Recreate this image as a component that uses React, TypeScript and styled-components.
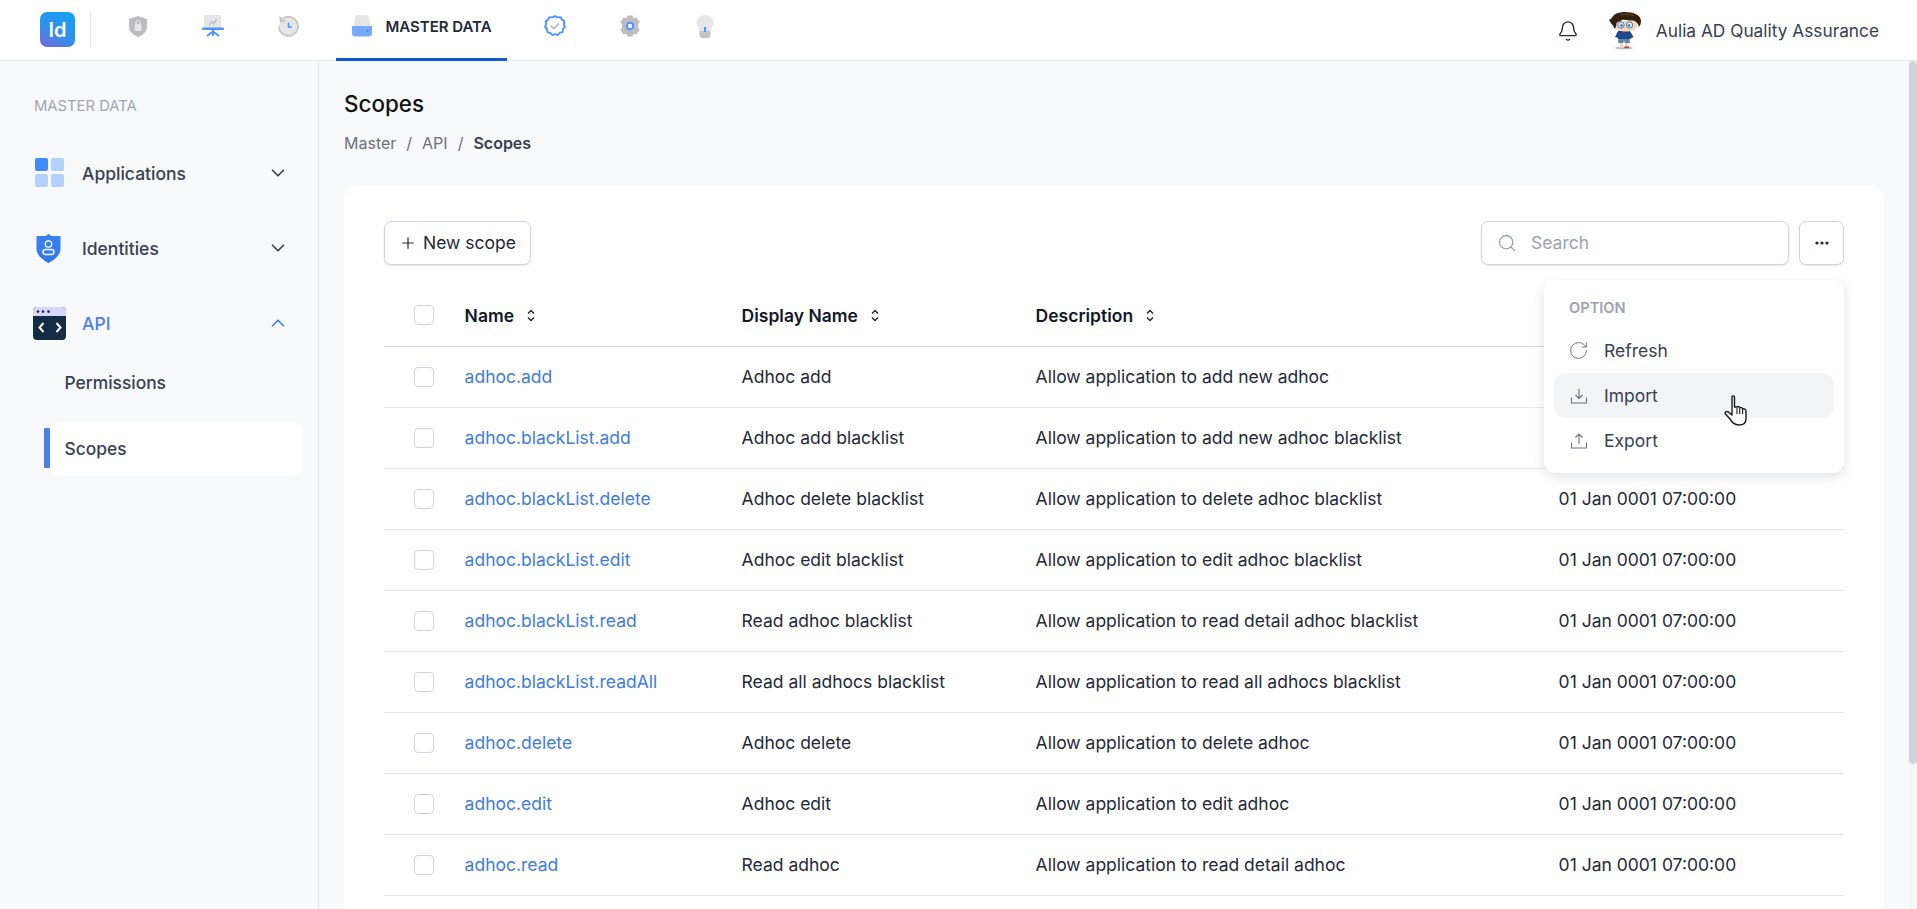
import { ReactNode } from 'react';
import styled, { createGlobalStyle } from 'styled-components';
import { ChevronDown, ChevronUp, Search, RotateCw, Plus, Bell } from 'lucide-react';

const GlobalStyle = createGlobalStyle`
  html, body, #root {
    margin: 0;
    padding: 0;
    height: 100%;
  }
  body {
    font-family: Inter, "Liberation Sans", sans-serif;
    font-size: 17.5px;
    color: #111827;
    background: #f8f9fb;
    overflow: hidden;
  }
  * {
    box-sizing: border-box;
  }
`;

const Page = styled.div`
  display: flex;
  flex-direction: column;
  height: 100vh;
`;

const Header = styled.header`
  display: flex;
  align-items: stretch;
  flex: 0 0 61px;
  background: #fff;
  box-shadow: inset 0 -1px 0 #e9eaee;
  padding: 0 38px 0 40px;
`;

const LogoBox = styled.div`
  width: 35px;
  height: 35px;
  margin-top: 12px;
  border-radius: 7px;
  background: linear-gradient(30deg, #7a67d6 0%, #2f8fee 45%, #14a3f2 100%);
  color: #fff;
  font-weight: 600;
  font-size: 20px;
  display: flex;
  align-items: center;
  justify-content: center;
`;

const Divider = styled.div`
  width: 1px;
  height: 37px;
  margin: 11px 9px 0 15px;
  background: #e5e7eb;
`;

const Tab = styled.div<{ $active?: boolean }>`
  display: flex;
  align-items: center;
  justify-content: center;
  gap: 12px;
  height: 61px;
  padding-bottom: 6px;
  width: ${(p) => (p.$active ? '171px' : '75px')};
  margin: ${(p) => (p.$active ? '0 10px 0 11px' : '0')};
  border-bottom: 3px solid ${(p) => (p.$active ? '#0b5ad4' : 'transparent')};
  font-size: 15px;
  font-weight: 600;
  color: #1f2937;
`;

const HeaderRight = styled.div`
  margin-left: auto;
  display: flex;
  align-items: center;
  color: #374151;
`;

const UserName = styled.span`
  margin-left: 14px;
  font-size: 17.3px;
  color: #374151;
`;

const BellWrap = styled.span`
  display: flex;
  margin-right: 29px;
  color: #1f2937;
`;

const Body = styled.div`
  flex: 1;
  display: flex;
  min-height: 0;
`;

const Sidebar = styled.aside`
  flex: 0 0 319px;
  border-right: 1px solid #e5e7eb;
  padding: 34px 15px 0 34px;
`;

const SideLabel = styled.div`
  font-size: 14.8px;
  line-height: 22px;
  color: #a1a5b3;
  margin-bottom: 26px;
`;

const SideItem = styled.div<{ $open?: boolean }>`
  display: flex;
  align-items: center;
  height: 60px;
  margin-bottom: ${(p) => (p.$open ? '2px' : '15px')};
  color: ${(p) => (p.$open ? '#4f7fe8' : '#374151')};
  font-weight: 500;
`;

const SideIcon = styled.span`
  flex: 0 0 48px;
  display: flex;
  align-items: center;
`;

const SideChevron = styled.span`
  margin-left: auto;
  margin-right: 14px;
  display: flex;
`;

const SubItem = styled.div<{ $active?: boolean }>`
  position: relative;
  display: flex;
  align-items: center;
  height: 55px;
  margin: 0 0 11px 13px;
  padding-left: 17.5px;
  border-radius: 12px;
  color: #374151;
  font-weight: 500;
  font-size: 17.4px;
  background: ${(p) => (p.$active ? '#fff' : 'transparent')};

  &::before {
    content: '';
    display: ${(p) => (p.$active ? 'block' : 'none')};
    position: absolute;
    left: -3px;
    top: 7px;
    bottom: 8px;
    width: 6px;
    border-radius: 1px;
    background: #4a7fe8;
  }
`;

const Main = styled.main`
  flex: 1;
  min-width: 0;
  display: flex;
  flex-direction: column;
  overflow: hidden;
  padding: 28px 25px 25px;
  background: #f8f9fb;
`;

const ScrollRail = styled.div`
  flex: 0 0 8px;
  background: #f5f6f8;
`;

const ScrollThumb = styled.div`
  height: 703px;
  border-radius: 4px;
  background: #d0d3da;
`;

const Title = styled.h1`
  margin: 0;
  font-size: 22.4px;
  line-height: 30px;
  font-weight: 500;
  color: #111;
`;

const Crumbs = styled.div`
  display: flex;
  align-items: center;
  gap: 10px;
  margin-top: 12px;
  margin-bottom: 31px;
  font-size: 16px;
  line-height: 24px;
  color: #6b7280;
`;

const CrumbCurrent = styled.b`
  font-weight: 600;
  color: #374151;
`;

const Card = styled.section`
  position: relative;
  flex: 0 0 760px;
  background: #fff;
  border-radius: 12px;
  padding: 35px 40px 0;
`;

const Toolbar = styled.div`
  display: flex;
  align-items: center;
  gap: 10px;
  margin-bottom: 20px;
`;

const Button = styled.button`
  display: flex;
  align-items: center;
  justify-content: center;
  height: 44px;
  background: #fff;
  border: 1px solid #d1d5db;
  border-radius: 7px;
  box-shadow: 0 1px 2px rgba(17, 24, 39, 0.1);
  font: inherit;
  color: #1f2937;
  padding: 0;
`;

const NewButton = styled(Button)`
  width: 147px;
  gap: 6px;
  margin-right: auto;
  padding-bottom: 1px;
`;

const MoreButton = styled(Button)`
  width: 45px;
`;

const SearchBox = styled.div`
  display: flex;
  align-items: center;
  gap: 14px;
  width: 308px;
  height: 44px;
  padding: 0 0 1px 15px;
  background: #fff;
  border: 1px solid #d1d5db;
  border-radius: 7px;
  box-shadow: 0 1px 2px rgba(17, 24, 39, 0.1);
  color: #9ca3af;
`;

const Table = styled.table`
  width: 100%;
  table-layout: fixed;
  border-collapse: collapse;
`;

const HeadCell = styled.th`
  height: 61px;
  padding: 0;
  text-align: left;
  font-weight: 600;
  color: #111827;
  border-bottom: 1px solid #d1d5db;
`;

const Cell = styled.td`
  height: 61px;
  padding: 0;
  color: #1f2937;
  border-bottom: 1px solid #e5e7eb;
`;

const HeadLabel = styled.span`
  display: inline-flex;
  align-items: center;
  gap: 13px;
`;

const Check = styled.span`
  display: block;
  width: 20px;
  height: 20px;
  margin-left: 30px;
  border: 1px solid #d1d5db;
  border-radius: 4px;
  background: #fff;
`;

const NameLink = styled.a`
  color: #3f7cdc;
`;

const Menu = styled.div`
  position: absolute;
  top: 94px;
  right: 40px;
  width: 300px;
  height: 193px;
  padding: 16px 10px;
  background: #fff;
  border-radius: 11px;
  box-shadow: 0 4px 12px rgba(17, 24, 39, 0.12);
`;

const MenuLabel = styled.div`
  padding-left: 15px;
  margin-bottom: 8px;
  font-size: 14.6px;
  line-height: 24px;
  font-weight: 600;
  color: #9ca3af;
`;

const MenuItem = styled.div<{ $hover?: boolean }>`
  display: flex;
  align-items: center;
  gap: 17px;
  height: 45px;
  padding-left: 16px;
  border-radius: 12px;
  background: ${(p) => (p.$hover ? '#f3f4f6' : 'transparent')};
  color: #374151;
`;

const MenuIcon = styled.span`
  flex: 0 0 17px;
  min-width: 0;
  display: flex;
  align-items: center;
  justify-content: center;
  color: #6b7280;

  svg {
    flex-shrink: 0;
  }
`;

const Pointer = styled.span`
  position: absolute;
  left: 180px;
  top: 115px;
  display: flex;
`;

/* top bar duotone icons */
const ShieldIcon = () => (
  <svg width="18" height="21" viewBox="0 0 18 21">
    <path d="M9 0 L18 3 V11 C18 16 13 19.5 9 21 C5 19.5 0 16 0 11 V3 Z" fill="#bcbdc2" />
    <rect x="5.5" y="8" width="7" height="7" rx="1.5" fill="#e8e8ea" />
    <path d="M7 8 V6.5 a2 2 0 0 1 4 0 V8" fill="none" stroke="#e8e8ea" strokeWidth="1.2" />
  </svg>
);

const BoardIcon = () => (
  <svg width="22" height="22" viewBox="0 0 22 22">
    <rect x="2" y="0" width="17" height="13" fill="#e6e6e8" />
    <path d="M7 10 L10 6.5 L11.5 8.5 L14.5 4.5" fill="none" stroke="#bcbdc2" strokeWidth="1.4" />
    <rect x="0" y="12.5" width="22" height="2.4" rx="1" fill="#4b94ff" />
    <path d="M10.9 14 V21 M5 21 L10.9 16.5 L17 21" fill="none" stroke="#4b94ff" strokeWidth="2" />
  </svg>
);

const HistoryIcon = () => (
  <svg width="22" height="22" viewBox="0 0 22 22">
    <circle cx="11.5" cy="11.5" r="9.5" fill="#e6e6e8" />
    <path d="M4 5.5 A9.5 9.5 0 1 1 2 11.5" fill="none" stroke="#c4c5c9" strokeWidth="1.8" />
    <path d="M3 1.5 L3.6 6.5 L8.5 5.5" fill="none" stroke="#c4c5c9" strokeWidth="1.6" />
    <path d="M11.5 7.5 V12 H15" fill="none" stroke="#4b94ff" strokeWidth="1.6" />
  </svg>
);

const DatabaseIcon = () => (
  <svg width="22" height="22" viewBox="0 0 22 22">
    <path d="M3 11 L4 3 Q4.3 0 7 0 H15 Q17.7 0 18 3 L19.5 11 Z" fill="#e6e6e8" />
    <path d="M1 11 H21 V18 Q21 21.5 17.5 21.5 H4.5 Q1 21.5 1 18 Z" fill="#77aaff" />
    <circle cx="16.5" cy="16" r="0.9" fill="#3b7de8" />
  </svg>
);

const BadgeIcon = () => (
  <svg width="22" height="22" viewBox="0 0 22 22">
    <path
      d="M11 1 L13.6 2.4 L16.6 2.1 L18 4.7 L20.4 6.4 L19.8 9.3 L21 11.9 L19 14.1 L18.6 17.1 L15.7 17.9 L13.6 20.1 L11 19 L8.4 20.1 L6.3 17.9 L3.4 17.1 L3 14.1 L1 11.9 L2.2 9.3 L1.6 6.4 L4 4.7 L5.4 2.1 L8.4 2.4 Z"
      fill="#fff"
      stroke="#4b94ff"
      strokeWidth="1.9"
      strokeLinejoin="round"
    />
    <path d="M7 11 L10 13.6 L15 8.5" fill="none" stroke="#bcbdc2" strokeWidth="1.8" />
  </svg>
);

const GearIcon = () => (
  <svg width="22" height="22" viewBox="0 0 22 22">
    <path
      d="M8.5 0.5 H13.5 L14.5 3.2 L17.3 2.4 L20.8 7 L19 9 V13 L20.8 15 L17.3 19.6 L14.5 18.8 L13.5 21.5 H8.5 L7.5 18.8 L4.7 19.6 L1.2 15 L3 13 V9 L1.2 7 L4.7 2.4 L7.5 3.2 Z"
      fill="#bcbdc2"
      strokeLinejoin="round"
    />
    <circle cx="11" cy="11" r="3.2" fill="#fff" stroke="#4b94ff" strokeWidth="2" />
  </svg>
);

const BulbIcon = () => (
  <svg width="18" height="23" viewBox="0 0 18 23">
    <path d="M9 0 C14 0 17.5 3.8 17.5 8 C17.5 11.5 14.5 13 14.5 17 H3.5 C3.5 13 0.5 11.5 0.5 8 C0.5 3.8 4 0 9 0 Z" fill="#e6e6e8" />
    <path d="M3.5 16 H14.5 V20 Q14.5 23 11.5 23 H6.5 Q3.5 23 3.5 20 Z" fill="#c1c2c6" />
    <rect x="8" y="12" width="2" height="5" fill="#4b94ff" />
  </svg>
);

const ConanAvatar = () => (
  <svg width="34" height="38" viewBox="0 0 34 38">
    <ellipse cx="16" cy="36" rx="9" ry="1.5" fill="#bdbdbd" />
    <rect x="12" y="30" width="3" height="5" fill="#ecd3b8" />
    <rect x="17" y="30" width="3" height="5" fill="#ecd3b8" />
    <rect x="11" y="34.5" width="4.5" height="1.6" fill="#d8d8d8" />
    <rect x="16.5" y="34.5" width="4.5" height="1.6" fill="#b33b3b" />
    <path d="M10.5 26 H21.5 L22 31 H17 L16 29 L15 31 H10 Z" fill="#6485ab" />
    <path d="M10 19 Q16 17 22 19 L25.5 25 L22.5 26.5 V27 H10 V26 L7 25 Z" fill="#1d4a8e" />
    <path d="M14.5 19 L16 22 L17.5 19 Z" fill="#c62828" />
    <path d="M7 9 H29 V15 Q27 19.5 18 19.5 Q9 19.5 7 15 Z" fill="#f2d8bd" />
    <path d="M1 8 L4 6 C5 2 11 0 17 0 C25 0 33 3 33 9 C33 12 32 13 31 15 C30 11 28 9 25 8.5 C21 9 17 7 14 8 C12 10 10 9 8.5 11 C8.5 13 8 15 7 17 C5.5 15.5 5.5 13 3.5 12 Z" fill="#33200f" />
    <path d="M12 3 C16 1.5 22 2 26 4" fill="none" stroke="#6b4a2a" strokeWidth="1" />
    <circle cx="13" cy="13" r="3.2" fill="#d7e6f6" stroke="#45699b" strokeWidth="0.8" />
    <circle cx="21.5" cy="13" r="3.2" fill="#d7e6f6" stroke="#45699b" strokeWidth="0.8" />
    <circle cx="13.5" cy="13.5" r="1.3" fill="#3f6fb0" />
    <circle cx="21" cy="13.5" r="1.3" fill="#3f6fb0" />
  </svg>
);

/* sidebar icons */
const GridIcon = () => (
  <svg width="30" height="30" viewBox="0 0 30 30">
    <rect x="1" y="0" width="13" height="13" rx="2" fill="#3f8cff" />
    <rect x="17" y="0" width="13" height="13" rx="2" fill="#b2d1ff" />
    <rect x="1" y="16" width="13" height="13" rx="2" fill="#b2d1ff" />
    <rect x="17" y="16" width="13" height="13" rx="2" fill="#b2d1ff" />
  </svg>
);

const IdentityIcon = () => (
  <svg width="29" height="29" viewBox="0 0 29 29">
    <defs>
      <linearGradient id="shieldFill" x1="0" y1="0" x2="0" y2="1">
        <stop offset="0" stopColor="#3b82f0" />
        <stop offset="1" stopColor="#2f76e8" />
      </linearGradient>
    </defs>
    <path d="M14.5 0 L17.5 2 H26.5 V15 C26.5 21 20.5 26 14.5 29 C8.5 26 2.5 21 2.5 15 V2 H11.5 Z" fill="url(#shieldFill)" />
    <circle cx="14.5" cy="10" r="3.2" fill="none" stroke="#fff" strokeWidth="1.3" />
    <rect x="9" y="15.5" width="11" height="5" rx="2.5" fill="none" stroke="#fff" strokeWidth="1.3" />
  </svg>
);

const ApiIcon = () => (
  <svg width="33" height="33" viewBox="0 0 33 33" style={{ marginLeft: -1 }}>
    <rect x="0" y="0" width="33" height="33" rx="4" fill="#152c47" />
    <path d="M0 9 V4 Q0 0 4 0 H29 Q33 0 33 4 V9 Z" fill="#d9d6fb" />
    <circle cx="5" cy="4.6" r="1.3" fill="#152c47" />
    <circle cx="10" cy="4.6" r="1.3" fill="#152c47" />
    <circle cx="15.5" cy="4.6" r="1.3" fill="#152c47" />
    <path d="M10.5 16 L6.5 20.5 L10.5 25 M23.5 16 L27.5 20.5 L23.5 25" fill="none" stroke="#fff" strokeWidth="2" />
  </svg>
);

/* small table and menu icons */
const SortIcon = () => (
  <svg width="8" height="13" viewBox="0 0 8 13">
    <path d="M1 4.5 L4 1.5 L7 4.5 M1 8.5 L4 11.5 L7 8.5" fill="none" stroke="#1f2937" strokeWidth="1.5" />
  </svg>
);

const DotsIcon = () => (
  <svg width="14" height="4" viewBox="0 0 14 4">
    <circle cx="2" cy="2" r="1.6" fill="#1f2937" />
    <circle cx="7" cy="2" r="1.6" fill="#1f2937" />
    <circle cx="12" cy="2" r="1.6" fill="#1f2937" />
  </svg>
);

const ImportIcon = () => (
  <svg width="16" height="16" viewBox="0 0 16 16" fill="none" stroke="currentColor" strokeWidth="1.1">
    <path d="M0.5 9.5 V15 H15.5 V9.5" />
    <path d="M8 1 V10.5 M4.5 7 L8 10.5 L11.5 7" />
  </svg>
);

const ExportIcon = () => (
  <svg width="16" height="16" viewBox="0 0 16 16" fill="none" stroke="currentColor" strokeWidth="1.1">
    <path d="M0.5 9.5 V15 H15.5 V9.5" />
    <path d="M8 11 V1 M4.5 4.5 L8 1 L11.5 4.5" />
  </svg>
);

const HandCursor = () => (
  <svg width="24" height="31" viewBox="0 0 24 31">
    <path
      d="M8 2 C8 0.5 10.5 0.5 10.5 2 V12 L13 12 C14 11 15.5 11.5 15.5 13 C16.5 12 18.5 12.5 18.5 14 C20 13.5 22 14 22 16 V24 C22 28 19 30 15 30 C10 30 8 27 6 24 L1.5 19 C0.5 17.5 2.5 15.5 4.5 17 L8 20 Z"
      fill="#fff"
      stroke="#1a1a1a"
      strokeWidth="1.4"
      strokeLinejoin="round"
    />
    <path d="M13 13 V19 M15.7 13.5 V19 M18.6 14.5 V19" stroke="#1a1a1a" strokeWidth="1.1" />
  </svg>
);

const tabs: { icon: ReactNode; label?: string }[] = [
  { icon: <ShieldIcon /> },
  { icon: <BoardIcon /> },
  { icon: <HistoryIcon /> },
  { icon: <DatabaseIcon />, label: 'MASTER DATA' },
  { icon: <BadgeIcon /> },
  { icon: <GearIcon /> },
  { icon: <BulbIcon /> },
];

const rows = [
  ['adhoc.add', 'Adhoc add', 'Allow application to add new adhoc'],
  ['adhoc.blackList.add', 'Adhoc add blacklist', 'Allow application to add new adhoc blacklist'],
  ['adhoc.blackList.delete', 'Adhoc delete blacklist', 'Allow application to delete adhoc blacklist'],
  ['adhoc.blackList.edit', 'Adhoc edit blacklist', 'Allow application to edit adhoc blacklist'],
  ['adhoc.blackList.read', 'Read adhoc blacklist', 'Allow application to read detail adhoc blacklist'],
  ['adhoc.blackList.readAll', 'Read all adhocs blacklist', 'Allow application to read all adhocs blacklist'],
  ['adhoc.delete', 'Adhoc delete', 'Allow application to delete adhoc'],
  ['adhoc.edit', 'Adhoc edit', 'Allow application to edit adhoc'],
  ['adhoc.read', 'Read adhoc', 'Allow application to read detail adhoc'],
];

export default function App() {
  return (
    <Page>
      <GlobalStyle />
      <Header>
        <LogoBox>Id</LogoBox>
        <Divider />
        {tabs.map((tab, i) => (
          <Tab key={i} $active={!!tab.label}>
            {tab.icon}
            {tab.label}
          </Tab>
        ))}
        <HeaderRight>
          <BellWrap>
            <Bell size={22} strokeWidth={1.5} />
          </BellWrap>
          <ConanAvatar />
          <UserName>Aulia AD Quality Assurance</UserName>
        </HeaderRight>
      </Header>
      <Body>
        <Sidebar>
          <SideLabel>MASTER DATA</SideLabel>
          <SideItem>
            <SideIcon>
              <GridIcon />
            </SideIcon>
            Applications
            <SideChevron>
              <ChevronDown size={22} strokeWidth={1.8} />
            </SideChevron>
          </SideItem>
          <SideItem>
            <SideIcon>
              <IdentityIcon />
            </SideIcon>
            Identities
            <SideChevron>
              <ChevronDown size={22} strokeWidth={1.8} />
            </SideChevron>
          </SideItem>
          <SideItem $open>
            <SideIcon>
              <ApiIcon />
            </SideIcon>
            API
            <SideChevron>
              <ChevronUp size={22} strokeWidth={1.8} />
            </SideChevron>
          </SideItem>
          <SubItem>Permissions</SubItem>
          <SubItem $active>Scopes</SubItem>
        </Sidebar>
        <Main>
          <Title>Scopes</Title>
          <Crumbs>
            <span>Master</span>
            <span>/</span>
            <span>API</span>
            <span>/</span>
            <CrumbCurrent>Scopes</CrumbCurrent>
          </Crumbs>
          <Card>
            <Toolbar>
              <NewButton>
                <Plus size={18} strokeWidth={1.6} />
                New scope
              </NewButton>
              <SearchBox>
                <Search size={20} strokeWidth={1.6} />
                Search
              </SearchBox>
              <MoreButton>
                <DotsIcon />
              </MoreButton>
            </Toolbar>
            <Table>
              <colgroup>
                <col style={{ width: 80.6 }} />
                <col style={{ width: 277 }} />
                <col style={{ width: 294 }} />
                <col style={{ width: 523 }} />
                <col />
              </colgroup>
              <thead>
                <tr>
                  <HeadCell>
                    <Check />
                  </HeadCell>
                  <HeadCell>
                    <HeadLabel>
                      Name <SortIcon />
                    </HeadLabel>
                  </HeadCell>
                  <HeadCell>
                    <HeadLabel>
                      Display Name <SortIcon />
                    </HeadLabel>
                  </HeadCell>
                  <HeadCell>
                    <HeadLabel>
                      Description <SortIcon />
                    </HeadLabel>
                  </HeadCell>
                  <HeadCell />
                </tr>
              </thead>
              <tbody>
                {rows.map((row) => (
                  <tr key={row[0]}>
                    <Cell>
                      <Check />
                    </Cell>
                    <Cell>
                      <NameLink>{row[0]}</NameLink>
                    </Cell>
                    <Cell>{row[1]}</Cell>
                    <Cell>{row[2]}</Cell>
                    <Cell>01 Jan 0001 07:00:00</Cell>
                  </tr>
                ))}
              </tbody>
            </Table>
            <Menu>
              <MenuLabel>OPTION</MenuLabel>
              <MenuItem>
                <MenuIcon>
                  <RotateCw size={21} strokeWidth={1.1} />
                </MenuIcon>
                Refresh
              </MenuItem>
              <MenuItem $hover>
                <MenuIcon>
                  <ImportIcon />
                </MenuIcon>
                Import
              </MenuItem>
              <MenuItem>
                <MenuIcon>
                  <ExportIcon />
                </MenuIcon>
                Export
              </MenuItem>
              <Pointer>
                <HandCursor />
              </Pointer>
            </Menu>
          </Card>
        </Main>
        <ScrollRail>
          <ScrollThumb />
        </ScrollRail>
      </Body>
    </Page>
  );
}
